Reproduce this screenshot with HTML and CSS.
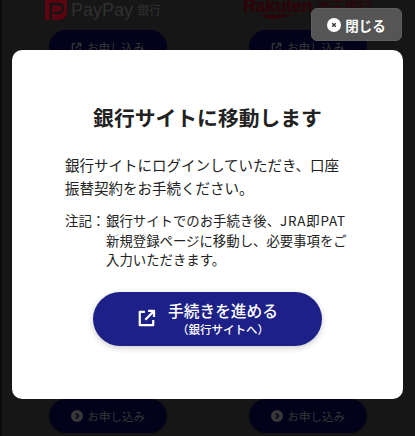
FILE: index.html
```html
<!DOCTYPE html>
<html lang="ja">
<head>
<meta charset="utf-8">
<title>銀行サイトに移動します</title>
<link rel="stylesheet" href="styles.css">
</head>
<body>
<div class="page">
  <div class="bank-grid">
    <div class="bank">
      <div class="logo paypay">
        <svg class="pp-mark" width="22" height="20" viewBox="0 0 22 20"><path d="M0 0H22V12C22 17 18 20 13 20H0Z" fill="#5a0511"/><path d="M6 20V4H13C17 4 18 6 18 8.500C18 11 16 13 13 13H9" fill="none" stroke="#151515" stroke-width="2.500"/></svg>
        <span class="pp-name">PayPay</span><span class="pp-bank">銀行</span>
      </div>
      <div class="apply">
        <svg width="11" height="11" viewBox="0 0 24 24" fill="none" stroke="#363636" stroke-width="3"><path d="M10 4H3V21H20V14M13 3H21V11M21 3L10 14"/></svg>
        <span>お申し込み</span>
      </div>
      <div class="spacer"></div>
      <div class="apply">
        <svg width="12" height="12" viewBox="0 0 24 24"><circle cx="12" cy="12" r="12" fill="#363636"/><path d="M10 7L15 12L10 17" fill="none" stroke="#02021a" stroke-width="3"/></svg>
        <span>お申し込み</span>
      </div>
    </div>
    <div class="bank">
      <div class="logo rakuten">
        <span class="rk-block">
          <span class="rk-name">Rakuten</span>
          <svg class="rk-swoosh" width="38" height="4" viewBox="0 0 38 4"><path d="M0 0H38L12 4Z" fill="#300207"/></svg>
        </span>
        <span class="rk-bank">楽天銀行</span>
      </div>
      <div class="apply">
        <svg width="11" height="11" viewBox="0 0 24 24" fill="none" stroke="#363636" stroke-width="3"><path d="M10 4H3V21H20V14M13 3H21V11M21 3L10 14"/></svg>
        <span>お申し込み</span>
      </div>
      <div class="spacer"></div>
      <div class="apply">
        <svg width="12" height="12" viewBox="0 0 24 24"><circle cx="12" cy="12" r="12" fill="#363636"/><path d="M10 7L15 12L10 17" fill="none" stroke="#02021a" stroke-width="3"/></svg>
        <span>お申し込み</span>
      </div>
    </div>
  </div>

  <button class="close" type="button">
    <svg width="14" height="14" viewBox="0 0 14 14"><circle cx="7" cy="7" r="7" fill="#fff"/><path d="M5.200 5.200L8.800 8.800M8.800 5.200L5.200 8.800" stroke="#333" stroke-width="1.300"/></svg>
    <span>閉じる</span>
  </button>

  <section class="modal">
    <h1 class="title">銀行サイトに移動します</h1>
    <p class="lead">銀行サイトにログインしていただき、口座<br>振替契約をお手続ください。</p>
    <div class="note">
      <span class="note-label">注記：</span>
      <p class="note-text">銀行サイトでのお手続き後、<span class="latin">JRA即PAT</span><br>新規登録ページに移動し、必要事項をご<br>入力いただきます。</p>
    </div>
    <a class="proceed" href="#">
      <svg width="19" height="19" viewBox="0 0 24 24" fill="none" stroke="#fff" stroke-width="2.800" stroke-linejoin="round"><path d="M10 3.500H3.500V20.500H20.500V14M14 2.500H21.500V10M21.500 2.500L10.500 13.500"/></svg>
      <span class="proceed-text">
        <span class="proceed-main">手続きを進める</span>
        <span class="proceed-sub">（銀行サイトへ）</span>
      </span>
    </a>
  </section>
</div>
</body>
</html>
```
FILE: styles.css
```css
* { box-sizing: border-box; }
html, body { margin: 0; height: 100%; }
body {
  font-family: "Noto Sans CJK JP", "Noto Sans", sans-serif;
  background: #151615;
  overflow: hidden;
}
.page {
  position: relative;
  width: 415px;
  height: 436px;
  background: #151615;
  border-left: 2px solid #0a0a0a;
  overflow: hidden;
}
.bank-grid {
  display: grid;
  grid-template-columns: 200px 200px;
  height: 436px;
  margin-left: 11px;
  border-left: 1px solid #181918;
}
.bank {
  display: flex;
  flex-direction: column;
  align-items: flex-start;
  padding-left: 35px;
  border-right: 1px solid #181918;
}
.logo {
  display: flex;
  align-items: flex-start;
  height: 30px;
}
.paypay { gap: 4px; margin-left: -4px; }
.pp-name {
  font: 400 18px/20px "Liberation Sans", sans-serif;
  color: #303030;
}
.pp-bank { font-size: 12px; line-height: 20px; color: #303030; }
.rakuten { gap: 4px; margin-left: -6px; margin-top: -3px; height: 33px; }
.rk-block { display: flex; flex-direction: column; align-items: center; }
.rk-name {
  font: 700 18px/19px "Liberation Sans", sans-serif;
  letter-spacing: -.2px;
  color: #300207;
}
.rk-swoosh { margin-top: -1px; }
.rk-bank { font-size: 14px; line-height: 18px; color: #300207; }
.apply {
  display: flex;
  align-items: center;
  justify-content: center;
  gap: 5px;
  width: 117.500px;
  height: 34px;
  flex: none;
  border-radius: 17px;
  background: #02021a;
  color: #363636;
  font-size: 11.500px;
}
.spacer { height: 335px; flex: none; }
.close {
  position: absolute;
  top: 8px;
  left: 309px;
  display: flex;
  align-items: center;
  justify-content: center;
  gap: 4px;
  width: 91px;
  height: 33px;
  padding: 0;
  border: 1px solid #5e5e5e;
  border-radius: 6px;
  background: #555;
  color: #fff;
  font: 700 13.500px/18px "Noto Sans CJK JP", sans-serif;
}
.modal {
  position: absolute;
  top: 50px;
  left: 10px;
  width: 391px;
  height: 349px;
  display: flex;
  flex-direction: column;
  padding: 51px 40px 0 53px;
  border-radius: 10px;
  background: #fff;
  color: #222;
}
.title {
  margin: 0 13px 20px 0;
  font-size: 20.800px;
  line-height: 32px;
  font-weight: 700;
  text-align: center;
  white-space: nowrap;
}
.lead {
  margin: 0 0 12px;
  font-size: 14.500px;
  line-height: 23px;
  white-space: nowrap;
}
.note {
  display: flex;
  font-size: 13.400px;
  line-height: 19.500px;
}
.note-label { flex: none; white-space: nowrap; width: 41px; }
.note-text { margin: 0; white-space: nowrap; }
.latin { letter-spacing: .8px; }
.proceed {
  display: flex;
  align-items: center;
  justify-content: center;
  gap: 12px;
  align-self: flex-start;
  width: 229px;
  height: 54px;
  margin: 22px 0 0 28px;
  flex: none;
  border-radius: 27px;
  background: #1c2087;
  color: #fff;
  text-decoration: none;
  box-shadow: 0 2px 6px rgba(0,0,0,.2);
}
.proceed-text { display: flex; flex-direction: column; align-items: center; }
.proceed-main { font-size: 15.700px; line-height: 20px; font-weight: 500; }
.proceed-sub { font-size: 11.500px; line-height: 16px; font-weight: 500; }
```
